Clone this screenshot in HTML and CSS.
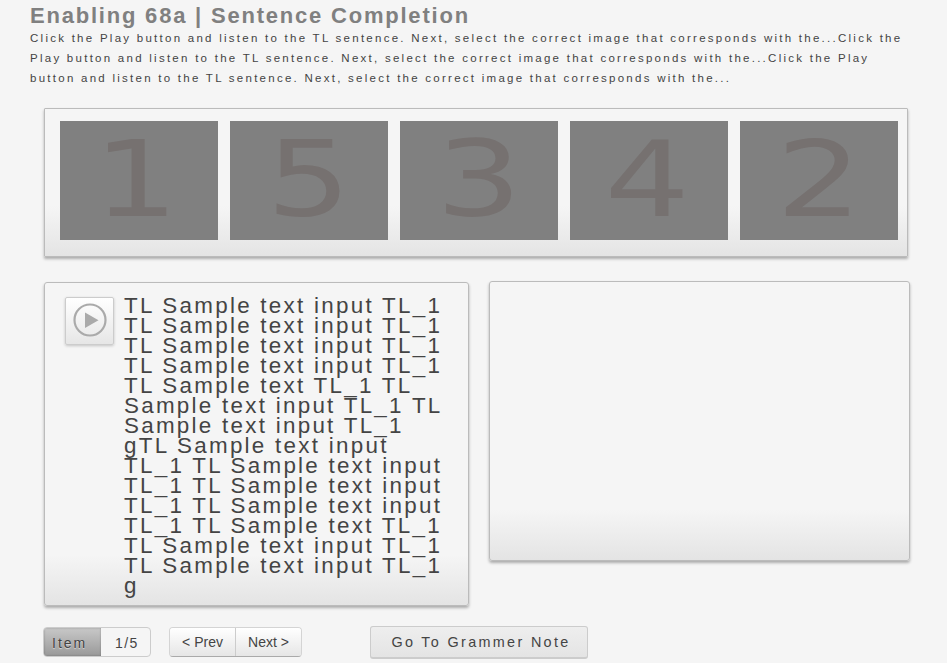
FILE: index.html
```
<!DOCTYPE html>
<html lang="en">
<head>
<meta charset="utf-8">
<title>Sentence Completion</title>
<link rel="stylesheet" href="styles.css">
</head>
<body>
<header class="intro">
  <h1>Enabling 68a | Sentence Completion</h1>
  <p>Click the Play button and listen to the TL sentence. Next, select the correct image that corresponds with the...Click the<br>Play button and listen to the TL sentence. Next, select the correct image that corresponds with the...Click the Play<br>button and listen to the TL sentence. Next, select the correct image that corresponds with the...</p>
</header>
<section class="panel choices">
  <svg class="thumb" viewBox="0 0 158 119"><text class="digit" transform="translate(33.3 95) scale(1.28 1)">1</text></svg>
  <svg class="thumb" viewBox="0 0 158 119"><text class="digit" transform="translate(36.3 95) scale(1.27 1)">5</text></svg>
  <svg class="thumb" viewBox="0 0 158 119"><text class="digit" transform="translate(35.7 95) scale(1.29 1)">3</text></svg>
  <svg class="thumb" viewBox="0 0 158 119"><text class="digit" transform="translate(34.6 95) scale(1.28 1)">4</text></svg>
  <svg class="thumb" viewBox="0 0 158 119"><text class="digit" transform="translate(36.1 95) scale(1.29 1)">2</text></svg>
</section>
<main class="work">
  <section class="panel prompt">
    <button class="play" aria-label="Play"><svg width="36" height="36" viewBox="0 0 36 36"><circle cx="18" cy="18" r="15.5"/><path d="M13 10.5V26L26.5 18.2Z"/></svg></button>
    <p>TL Sample text input TL_1<br>TL Sample text input TL_1<br>TL Sample text input TL_1<br>TL Sample text input TL_1<br>TL Sample text TL_1 TL<br>Sample text input TL_1 TL<br>Sample text input TL_1<br>gTL Sample text input<br>TL_1 TL Sample text input<br>TL_1 TL Sample text input<br>TL_1 TL Sample text input<br>TL_1 TL Sample text TL_1<br>TL Sample text input TL_1<br>TL Sample text input TL_1<br>g</p>
  </section>
  <section class="panel answer"></section>
</main>
<footer class="controls">
  <div class="counter"><span class="label">Item</span><span class="count">1/5</span></div>
  <div class="pager"><button>&lt; Prev</button><button>Next &gt;</button></div>
  <button class="note">Go To Grammer Note</button>
</footer>
</body>
</html>
```
FILE: styles.css
```
* { box-sizing: border-box; }
body {
  margin: 0;
  height: 663px;
  overflow: hidden;
  background: #f5f5f5;
  color: #444;
  font-family: "Liberation Sans", Arial, sans-serif;
}
h1, p { margin: 0; white-space: nowrap; }
button { font-family: inherit; color: #444; padding: 0; }
.intro { height: 108px; padding: 3px 0 0 30px; }
h1 { font-size: 22px; line-height: 25px; letter-spacing: 1.79px; color: #808080; }
.intro p { font-size: 11.5px; line-height: 20px; letter-spacing: 2.26px; }
.panel {
  border: 1px solid #bbb;
  border-radius: 3px;
  background: linear-gradient(#f5f5f5, #f5f5f5 calc(100% - 50px), #e4e4e4);
  box-shadow: 0 2px 3px rgba(0, 0, 0, .3);
}
.choices {
  display: flex;
  gap: 12px;
  width: 864px;
  height: 149px;
  margin-left: 44px;
  padding: 12px 0 0 15px;
  border-radius: 1px;
}
.thumb { width: 158px; height: 119px; overflow: visible; background: #808080; }
.digit { font: 105px "DejaVu Sans", sans-serif; fill: #767170; }
.work { display: flex; align-items: flex-start; gap: 20px; margin: 24px 0 0 44px; height: 346px; }
.prompt { display: flex; gap: 10px; width: 425px; height: 324px; margin-top: 1px; padding: 13px 0 0 20px; }
.prompt p { font-size: 22.4px; line-height: 20px; letter-spacing: 2.27px; }
.answer { width: 421px; height: 280px; }
.play {
  flex: none;
  width: 49px;
  height: 48px;
  margin-top: 1px;
  border: 1px solid #ccc;
  border-radius: 2px;
  background: linear-gradient(#fff, #e6e6e6);
  box-shadow: 0 1px 3px rgba(0, 0, 0, .2);
}
.play svg { display: block; margin: -3px auto 0; }
.play circle { fill: none; stroke: #aaa; stroke-width: 2.2; }
.play path { fill: #aaa; }
.controls { display: flex; padding-left: 43px; }
.counter {
  display: flex;
  width: 108px;
  height: 30px;
  border: 1px solid #ccc;
  border-radius: 4px;
  overflow: hidden;
  font-size: 14px;
  line-height: 30px;
  letter-spacing: 2px;
}
.label {
  width: 57px;
  padding-left: 8px;
  background: linear-gradient(#c8c8c8, #999);
  box-shadow: inset 0 0 2px rgba(0, 0, 0, .3);
  text-shadow: 0 1px 1px #ddd;
}
.count { padding-left: 14px; letter-spacing: 1.4px; }
.pager {
  display: flex;
  width: 133px;
  height: 30px;
  margin-left: 18px;
  border: 1px solid #d4d4d4;
  border-bottom-color: #aaa;
  border-radius: 4px;
  overflow: hidden;
}
.pager button {
  flex: 1;
  border: 0;
  background: linear-gradient(#fff, #e6e6e6);
  font-size: 14px;
}
.pager button + button { border-left: 1px solid #ccc; }
.note {
  width: 218px;
  height: 33px;
  margin: -1px 0 0 68px;
  padding-left: 4px;
  border: 1px solid #ccc;
  border-bottom-width: 2px;
  border-radius: 3px;
  background: linear-gradient(#eee, #e4e4e4);
  font-size: 14.4px;
  letter-spacing: 2.33px;
}
```
